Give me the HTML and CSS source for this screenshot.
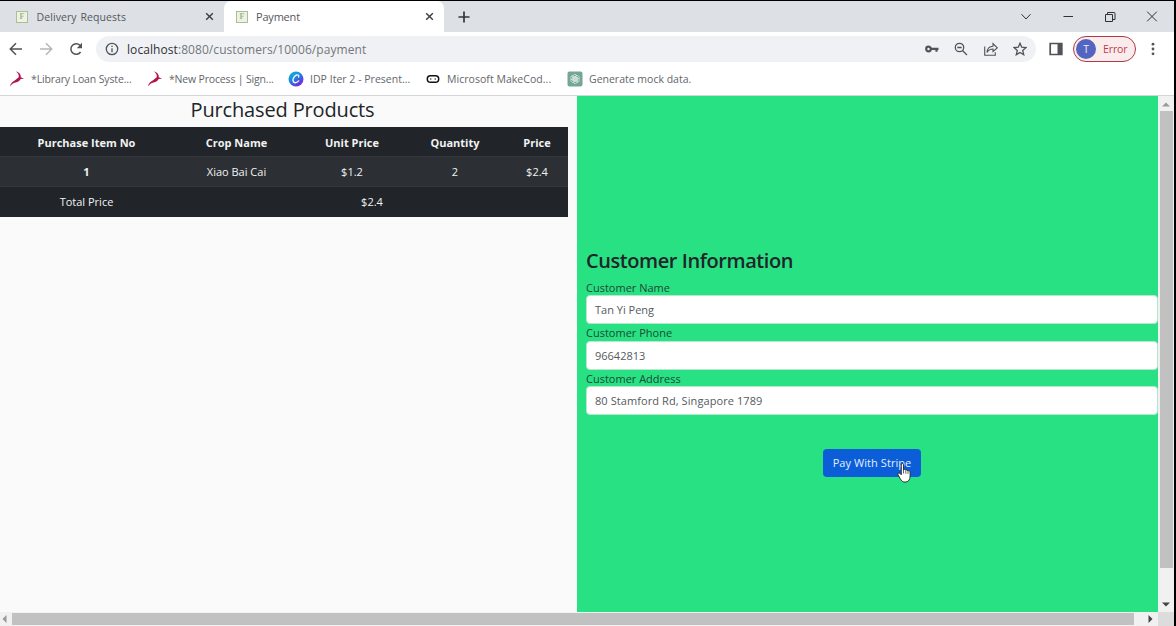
FILE: index.html
```html
<!DOCTYPE html>
<html lang="en">
<head>
<meta charset="utf-8">
<title>Payment</title>
<link rel="stylesheet" href="styles.css">
</head>
<body>
<div class="window">
  <header class="tabstrip">
    <div class="tab">
      <span class="favicon">F</span><span class="tab-title t-delivery">Delivery Requests</span>
      <svg class="tab-close" viewBox="0 0 10 10"><path d="M1.3 1.3l7.4 7.4M8.7 1.3L1.3 8.7"/></svg>
    </div>
    <div class="tab active">
      <span class="favicon">F</span><span class="tab-title t-payment">Payment</span>
      <svg class="tab-close" viewBox="0 0 10 10"><path d="M1.3 1.3l7.4 7.4M8.7 1.3L1.3 8.7"/></svg>
    </div>
    <svg class="new-tab" viewBox="0 0 12 12"><path d="M6 .5v11M.5 6h11"/></svg>
    <div class="win-controls">
      <svg viewBox="0 0 12 12"><path d="M1.500 3.200L6 8l4.500-4.800"/></svg>
      <svg viewBox="0 0 12 12"><path d="M1.500 5.500h9.500"/></svg>
      <svg viewBox="0 0 12 12"><path d="M1.500 3.500h7v7h-7zM3.500 3.500v-2h6.500a1 1 0 0 1 1 1v6h-2.500"/></svg>
      <svg viewBox="0 0 12 12"><path d="M1.200 .7l9.600 9.600M10.800 .7l-9.600 9.600"/></svg>
    </div>
  </header>

  <div class="toolbar">
    <svg class="nav" viewBox="0 0 14 14"><path d="M13 7H1.500M7 1.300L1.300 7 7 12.700"/></svg>
    <svg class="nav disabled" viewBox="0 0 14 14"><path d="M1 7h11.500M7 1.300L12.700 7 7 12.700"/></svg>
    <svg class="nav" viewBox="0 0 14 14"><path d="M11.600 10A5.300 5.300 0 1 1 11 3.300l1.200 1.400"/><path class="fill" d="M13 .8v5.400H7.800z"/></svg>
    <div class="omnibox">
      <svg class="info" viewBox="0 0 14 14"><circle cx="7" cy="7" r="5.700"/><path d="M7 6.300v4M7 3.700v1.400"/></svg>
      <span class="url"><b>localhost</b>:8080/customers/10006/payment</span>
      <div class="omni-icons">
        <svg viewBox="0 0 14 14"><circle class="bold" cx="3.500" cy="7" r="2.300"/><path class="bold" d="M6 6.800h7.500M11.500 6.800v3"/></svg>
        <svg viewBox="0 0 14 14"><circle cx="5.500" cy="5.500" r="4.200"/><path d="M8.700 8.700L13 13M3.300 5.500h4.400"/></svg>
        <svg viewBox="0 0 14 14"><path class="thin" d="M.7 4.500v8.800h10.600v-3M3 10.500c.3-4 2.500-6 6-6.200V1.500L13.300 5.800 9 9.500V7C6.300 7 4.500 8 3 10.500z"/></svg>
        <svg viewBox="0 0 14 14"><path d="M7 1.200l1.700 4 4.300.4-3.300 2.900 1 4.200L7 10.500l-3.700 2.200 1-4.200L1 5.600l4.300-.4z"/></svg>
      </div>
    </div>
    <svg class="panel-icon" viewBox="0 0 14 14"><path d="M1.200 1.500h11.600v11H1.200z"/><path class="fill" d="M8.500 1.500h4.300v11H8.500z"/></svg>
    <div class="profile"><span class="avatar">T</span><span>Error</span></div>
    <svg class="dots" viewBox="0 0 4 14"><circle cx="2" cy="2.200" r="1.400"/><circle cx="2" cy="7" r="1.400"/><circle cx="2" cy="11.800" r="1.400"/></svg>
  </div>

  <nav class="bookmarks">
    <a class="bm bm-library"><svg viewBox="0 0 14 14"><path fill="#b3124e" d="M6 .3c2.900.8 4.600 2.700 4.300 5.200l2.900 1.200-3 .3C9.400 8.800 8 9.700 5.700 10 3.700 10.300 2.400 11.500.8 13.600 1.400 11.200 2.600 9.500 4.700 8.600L8.500 5.500C8.900 3.500 8 1.900 6 .3z"/></svg><span>*Library Loan Syste...</span></a>
    <a class="bm bm-process"><svg viewBox="0 0 14 14"><path fill="#b3124e" d="M6 .3c2.900.8 4.600 2.700 4.300 5.200l2.900 1.200-3 .3C9.400 8.800 8 9.700 5.700 10 3.700 10.300 2.400 11.500.8 13.600 1.400 11.200 2.600 9.500 4.700 8.600L8.500 5.500C8.900 3.500 8 1.900 6 .3z"/></svg><span>*New Process | Sign...</span></a>
    <a class="bm bm-idp"><svg viewBox="0 0 16 16"><defs><linearGradient id="canva" x1="0" y1="0" x2=".7" y2="1"><stop offset="0" stop-color="#08c3d0"/><stop offset=".5" stop-color="#2482dc"/><stop offset="1" stop-color="#7c20e0"/></linearGradient></defs><circle cx="8" cy="8" r="7.500" fill="url(#canva)"/><path d="M10.600 6c.7-1.700-.5-2.500-1.900-2C6.300 4.800 4.700 7.500 5 9.700c.4 2.700 3.500 2.700 5.600.2" fill="none" stroke="#e8fbff" stroke-width="1.400" stroke-linecap="round"/></svg><span>IDP Iter 2 - Present...</span></a>
    <a class="bm bm-make"><svg viewBox="0 0 16 16"><rect x="2.300" y="4.700" width="11.400" height="6.600" rx="3.300" fill="none" stroke="#111" stroke-width="1.500"/><circle cx="5.800" cy="8" r=".7"/><circle cx="10.200" cy="8" r=".7"/></svg><span>Microsoft MakeCod...</span></a>
    <a class="bm bm-mock"><svg viewBox="0 0 16 16"><rect x=".5" y=".5" width="15" height="15" rx="2" fill="#74a597"/><g fill="none" stroke="#e1efeb" stroke-width=".75" transform="translate(1.200 1.200) scale(.85)"><path id="petal" d="M5.400 9.500V5.200a2.600 2.600 0 0 1 4.900-1.200L6.900 6v3.800"/><use href="#petal" transform="rotate(60 8 8)"/><use href="#petal" transform="rotate(120 8 8)"/><use href="#petal" transform="rotate(180 8 8)"/><use href="#petal" transform="rotate(240 8 8)"/><use href="#petal" transform="rotate(300 8 8)"/></g></svg><span>Generate mock data.</span></a>
  </nav>

  <div class="viewport">
    <main class="page">
      <section class="products">
        <h1>Purchased Products</h1>
        <table>
          <colgroup><col class="c-item"><col class="c-crop"><col class="c-unit"><col class="c-qty"><col class="c-price"></colgroup>
          <thead><tr><th>Purchase Item No</th><th>Crop Name</th><th>Unit Price</th><th>Quantity</th><th>Price</th></tr></thead>
          <tbody>
            <tr class="striped"><th>1</th><td>Xiao Bai Cai</td><td>$1.2</td><td>2</td><td>$2.4</td></tr>
            <tr><td>Total Price</td><td class="total" colspan="4">$2.4</td></tr>
          </tbody>
        </table>
      </section>
      <section class="customer">
        <h2>Customer Information</h2>
        <label>Customer Name</label>
        <div class="field f-name">Tan Yi Peng</div>
        <label>Customer Phone</label>
        <div class="field f-phone">96642813</div>
        <label>Customer Address</label>
        <div class="field f-address">80 Stamford Rd, Singapore 1789</div>
        <div class="pay"><span>Pay With Stripe</span>
          <svg class="cursor" viewBox="0 0 15 20"><path d="M4.300 1.700c0-1.500 2.200-1.500 2.200 0v5.200c.5-.8 2-.7 2.300.3.700-.6 1.900-.3 2.100.7.900-.5 2.200 0 2.200 1.200v4c0 3.500-1.700 6-5 6-2.500 0-3.700-1.200-4.800-3.300L1 11.800c-.8-1.500.9-2.500 2-1.400l1.300 1.400z" fill="#fff" stroke="#222" stroke-width=".9"/><path d="M6.500 7v3.500M8.800 7.500v3.200M11 8.200v2.700" fill="none" stroke="#222" stroke-width=".7"/></svg>
        </div>
      </section>
    </main>
    <div class="vscroll"><svg viewBox="0 0 8 5"><path fill="#9a9a9a" d="M0 4.500L4 .5l4 4z"/></svg><div class="vthumb"></div><svg viewBox="0 0 8 5"><path fill="#444" d="M0 .5h8l-4 4z"/></svg></div>
    <div class="hscroll"><svg viewBox="0 0 5 8"><path fill="#999" d="M4.500 0v8l-4-4z"/></svg><div class="hthumb"></div><svg viewBox="0 0 5 8"><path fill="#444" d="M.5 0v8l4-4z"/></svg></div>
    <div class="corner"></div>
  </div>
</div>
</body>
</html>
```
FILE: styles.css
```css
* { box-sizing: border-box; }
body { margin: 0; background: #000; font-family: "Open Sans", "Noto Sans", sans-serif; font-size: 11px; overflow: hidden; }
svg { display: block; flex: none; fill: none; stroke: #505357; }
svg .fill { fill: #505357; stroke: none; }
.window { width: 1174px; height: 625px; margin-top: 1px; background: #fff; display: flex; flex-direction: column; }

.tabstrip { height: 31px; background: #dde0e5; display: flex; align-items: center; }
.tab { width: 224px; height: 31px; padding: 0 10px 0 16px; display: flex; align-items: center; color: #55585d; }
.tab.active { width: 220px; padding-left: 12px; background: #fff; border-radius: 7px 7px 0 0; }
.favicon { width: 12px; height: 12px; border: 1px solid #a9c191; background: #eef1e6; color: #9db684; font: bold 8px/10px "Liberation Serif", serif; text-align: center; margin-right: 8px; }
.tab-title { flex: 1; white-space: nowrap; }
.t-delivery { letter-spacing: -.08px; padding-left: .5px; letter-spacing: 0; font-size: 10.500px; word-spacing: 1px; letter-spacing: .08px; }
.t-payment { letter-spacing: -.2px; }
.tab-close { width: 9px; height: 9px; stroke: #3c4043; stroke-width: 1.600; }
.new-tab { width: 12px; height: 12px; margin-left: 14px; stroke: #33363a; stroke-width: 1.700; }
.win-controls { margin-left: auto; padding-right: 16px; display: flex; gap: 30px; }
.win-controls svg { width: 12px; height: 12px; stroke: #303236; stroke-width: 1; }

.toolbar { height: 34px; display: flex; align-items: center; padding: 0 17px 0 9px; }
.nav { width: 14px; height: 14px; margin-right: 16px; stroke-width: 1.500; }
.nav.disabled { stroke: #b5b7ba; }
.omnibox { width: 940px; height: 26px; margin-left: -3px; background: #f0f1f4; border-radius: 13px; display: flex; align-items: center; padding: 0 9px; }
.info { width: 14px; height: 14px; margin-right: 8px; stroke-width: 1.300; }
.url { font-size: 12px; letter-spacing: .07px; color: #74777b; white-space: nowrap; }
.url b { font-weight: 400; color: #303236; }
.omni-icons { margin-left: auto; display: flex; gap: 15.500px; }
.omni-icons svg { width: 14px; height: 14px; stroke-width: 1.300; }
.omni-icons .bold { stroke-width: 2.200; }
.omni-icons .thin { stroke-width: 1.100; }
.panel-icon { width: 14px; height: 14px; margin-left: 13px; stroke-width: 1.700; }
.profile { width: 63px; height: 26px; margin-left: 10px; border: 1px solid #b03a43; border-radius: 13px; background: #faecec; color: #c23a4c; display: flex; align-items: center; padding-left: 2px; gap: 7px; font-size: 10.500px; letter-spacing: -.1px; }
.avatar { width: 20px; height: 20px; border-radius: 50%; background: #5365bf; color: #e9ecff; text-align: center; line-height: 20px; }
.dots { width: 4px; height: 14px; margin-left: auto; margin-right: 2px; fill: #505357; stroke: none; }

.bookmarks { height: 30px; border-bottom: 1px solid #d5d6d8; display: flex; padding: 0 0 4px 9px; color: #63666b; flex: none; }
.bm { display: flex; align-items: center; white-space: nowrap; font-size: 10.500px; }
.bm svg { width: 16px; height: 16px; stroke: none; fill: #111; margin-right: 6px; }
.bm-library { width: 138px; letter-spacing: -.13px; }
.bm-process { width: 141px; letter-spacing: -.17px; }
.bm-idp { width: 137px; letter-spacing: .02px; }
.bm-make { width: 142px; letter-spacing: .04px; }

.viewport { flex: 1; display: grid; grid-template-columns: 1158px 16px; grid-template-rows: 516px 14px; }
.page { display: flex; background: #fafafa; color: #212529; }
.products { width: 577px; padding-right: 9px; }
h1 { margin: 0; height: 31px; font-size: 20px; line-height: 28px; font-weight: 500; letter-spacing: -.15px; text-align: center; padding-right: 3px; }
table { width: 568px; border-collapse: separate; border-spacing: 0; table-layout: fixed; background: #212529; color: #f1f2f3; text-align: center; }
th, td { height: 30px; padding: 0; border-bottom: 1px solid #33373b; }
thead th { padding-top: 1px; }
tbody tr:last-child td { border-bottom-color: #212529; }
.total { padding-left: 3px; }
.striped { background: #2c3034; }
.c-item { width: 173px; } .c-crop { width: 127px; } .c-unit { width: 104px; } .c-qty { width: 102px; } .c-price { width: 62px; }

.customer { width: 581px; background: #28e183; padding: 151px 0 0 9px; }
h2 { margin: 0; height: 32px; font-size: 20px; line-height: 28px; font-weight: 600; letter-spacing: -.43px; }
label { display: block; height: 16.500px; line-height: 17px; color: #1d4836; }
h2 + label { height: 16px; }
.field { height: 29px; background: #fff; border: 1px solid #b5e8cd; border-radius: 4px; padding-left: 8px; line-height: 28px; color: #555a60; }
.f-address { letter-spacing: .08px; }
.pay { position: relative; width: 98px; height: 28px; margin: 34px auto 0; border-radius: 4px; background: #0b5ed7; color: #e4eefc; text-align: center; line-height: 28px; letter-spacing: .07px; }
.cursor { position: absolute; left: 74px; top: 14px; width: 15px; height: 20px; }

.vscroll { background: #f1f1f1; display: flex; flex-direction: column; align-items: center; justify-content: space-between; padding: 6px 0 5px; }
.vscroll svg { width: 8px; height: 5px; stroke: none; }
.vthumb { width: 13px; height: 457px; margin-bottom: 30px; background: #c1c1c1; }
.hscroll { background: #f1f1f1; display: flex; align-items: center; padding: 0 5px 0 2px; }
.hscroll svg { width: 5px; height: 8px; stroke: none; }
.hthumb { width: 1122px; height: 12px; margin: 0 auto 0 5px; background: #c1c1c1; }
.corner { background: #dcdcdc; }
```
